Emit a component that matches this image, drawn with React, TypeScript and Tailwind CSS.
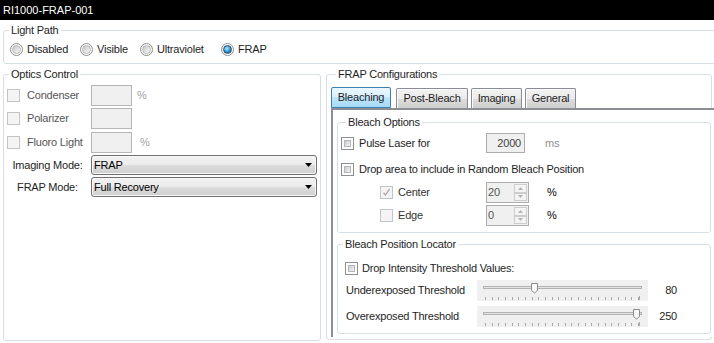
import React from "react";

type CheckVariant = "enabled" | "disabled" | "disabledChecked";

function Check({ variant }: { variant: CheckVariant }) {
  if (variant === "enabled") {
    return (
      <div className="w-[13px] h-[13px] shrink-0 border border-[#8e8f8f] bg-white p-[2px]">
        <div className="w-full h-full border border-[#b4b8bd] bg-[linear-gradient(135deg,#c9ccd1,#f4f4f4)]" />
      </div>
    );
  }
  return (
    <div className="w-[13px] h-[13px] shrink-0 border border-[#c4c4c4] bg-[#f4f4f4] flex items-center justify-center">
      {variant === "disabledChecked" ? (
        <svg width="9" height="9" viewBox="0 0 9 9">
          <path d="M1.5 4.8 L3.5 7 L7.5 1.2" fill="none" stroke="#a8a8a8" strokeWidth="1.3" />
        </svg>
      ) : null}
    </div>
  );
}

function Radio({ checked }: { checked?: boolean }) {
  return (
    <div className="w-[13px] h-[13px] shrink-0 rounded-full border border-[#8e8f8f] bg-white flex items-center justify-center">
      {checked ? (
        <div className="w-[9px] h-[9px] rounded-full border border-[#2b4b66] bg-[radial-gradient(circle_at_40%_35%,#b9ecff_0%,#3aa3e0_45%,#0d4f8c_100%)]" />
      ) : (
        <div className="w-[9px] h-[9px] rounded-full border border-[#b9b9b9] bg-[linear-gradient(135deg,#c8c8c8,#f8f8f8)]" />
      )}
    </div>
  );
}

function Group({
  label,
  className = "",
  children,
}: {
  label: string;
  className?: string;
  children?: React.ReactNode;
}) {
  return (
    <fieldset className={`min-w-0 border border-[#d5dfe5] rounded-[3px] ${className}`}>
      <legend className="ml-[5px] px-[2px] leading-[14px] text-[#1e1e1e]">{label}</legend>
      {children}
    </fieldset>
  );
}

function Select({ value }: { value: string }) {
  return (
    <div className="w-[226px] h-[20px] rounded-[3px] border border-[#707070] bg-[linear-gradient(#f2f2f2,#ebebeb_50%,#dddddd_50%,#cfcfcf)] shadow-[inset_0_0_0_1px_#f8f8f8] flex items-center pl-[2px] pr-[4px]">
      <span className="flex-1 text-black leading-[14px]">{value}</span>
      <svg width="7" height="4" viewBox="0 0 7 4">
        <path d="M0 0h7L3.5 4z" fill="#000" />
      </svg>
    </div>
  );
}

function Spin({ value }: { value: string }) {
  return (
    <div className="w-[43px] h-[21px] border border-[#acacac] bg-[#f0f0f0] flex">
      <span className="flex-1 pl-[1px] leading-[19px] text-[#555]">{value}</span>
      <div className="w-[15px] flex flex-col p-[1px]">
        <div className="flex-1 border border-[#cdcdcd] bg-[#f4f4f4] flex items-center justify-center">
          <svg width="5" height="3" viewBox="0 0 5 3">
            <path d="M0 3h5L2.5 0z" fill="#b2b2b2" />
          </svg>
        </div>
        <div className="flex-1 border border-[#cdcdcd] bg-[#f4f4f4] flex items-center justify-center">
          <svg width="5" height="3" viewBox="0 0 5 3">
            <path d="M0 0h5L2.5 3z" fill="#b2b2b2" />
          </svg>
        </div>
      </div>
    </div>
  );
}

function Slider({ value }: { value: number }) {
  const x = 9 + (value / 255) * 153;
  const ticks: number[] = [];
  for (let i = 0; i < 24; i++) ticks.push(8 + i * 6.65);
  return (
    <svg width="171" height="21" viewBox="0 0 171 21" className="block">
      <rect x="0" y="0" width="171" height="21" fill="#f0f0f0" />
      <rect x="6.5" y="6.5" width="158" height="2" fill="#e4e4e4" stroke="#b3b3b3" strokeWidth="1" />
      {ticks.map((t, i) => (
        <line key={i} x1={Math.round(t) + 0.5} y1="17" x2={Math.round(t) + 0.5} y2="20" stroke="#a9a9a9" strokeWidth="1" />
      ))}
      <line x1="162.5" y1="16" x2="162.5" y2="20" stroke="#a9a9a9" strokeWidth="1" />
      <path
        d={`M${Math.round(x) - 3 + 0.5} 3.5 h6 v7 l-3 2.5 l-3 -2.5 z`}
        fill="#f7f7f7"
        stroke="#8c8c8c"
        strokeWidth="1"
      />
    </svg>
  );
}

export default function App() {
  return (
    <div className="w-[714px] h-[343px] overflow-hidden bg-white text-[11px] tracking-[-0.2px] text-[#1e1e1e] font-['Liberation_Sans',Arial,sans-serif]">
      {/* Title bar */}
      <div className="h-[20px] bg-black text-white pl-[3px] leading-[20px] tracking-normal">RI1000-FRAP-001</div>

      {/* Light Path */}
      <Group label="Light Path" className="ml-[3px] mt-[3px] w-[730px] pt-[6px] pb-[7px]">
        <div className="flex items-center h-[13px] pl-[6px]">
          <div className="w-[70px] flex items-center gap-[4px]">
            <Radio />
            <span>Disabled</span>
          </div>
          <div className="w-[60px] flex items-center gap-[4px]">
            <Radio />
            <span>Visible</span>
          </div>
          <div className="w-[81px] flex items-center gap-[4px]">
            <Radio />
            <span>Ultraviolet</span>
          </div>
          <div className="flex items-center gap-[4px]">
            <Radio checked />
            <span>FRAP</span>
          </div>
        </div>
      </Group>

      <div className="flex mt-[3px] ml-[3px] gap-[5px]">
        {/* Optics Control */}
        <Group label="Optics Control" className="w-[318px] h-[274px] pt-[4px]">
          <div className="flex items-center h-[21px] pl-[3px]">
            <Check variant="disabled" />
            <span className="w-[71px] pl-[7px] text-[#555]">Condenser</span>
            <div className="w-[41px] h-[21px] border border-[#b5b5b5] bg-[#f0f0f0]" />
            <span className="ml-[5px] text-[#a0a0a0]">%</span>
          </div>
          <div className="flex items-center h-[21px] pl-[3px] mt-[2px]">
            <Check variant="disabled" />
            <span className="w-[71px] pl-[7px] text-[#555]">Polarizer</span>
            <div className="w-[41px] h-[21px] border border-[#b5b5b5] bg-[#f0f0f0]" />
          </div>
          <div className="flex items-center h-[21px] pl-[3px] mt-[3px]">
            <Check variant="disabled" />
            <span className="w-[71px] pl-[7px] text-[#555]">Fluoro Light</span>
            <div className="w-[41px] h-[21px] border border-[#b5b5b5] bg-[#f0f0f0]" />
            <span className="ml-[8px] text-[#a0a0a0]">%</span>
          </div>
          <div className="flex items-center mt-[2px]">
            <span className="w-[87px] text-center">Imaging Mode:</span>
            <Select value="FRAP" />
          </div>
          <div className="flex items-center mt-[2px]">
            <span className="w-[87px] text-center">FRAP Mode:</span>
            <Select value="Full Recovery" />
          </div>
        </Group>

        {/* FRAP Configurations */}
        <Group label="FRAP Configurations" className="w-[386px] h-[273px] pt-[6px] pl-[4px]">
          <div className="flex items-end h-[21px]">
            <div className="w-[60px] h-[21px] rounded-t-[2px] border border-[#3c7fb1] bg-[linear-gradient(#eaf6fd,#d9f0fc_50%,#bee6fd_50%,#a7d9f5)] flex items-center justify-center text-[#1e1e1e]">
              Bleaching
            </div>
            <div className="ml-[5px] w-[72px] h-[20px] rounded-t-[2px] border border-[#898c95] border-b-0 bg-[linear-gradient(#f2f2f2,#ebebeb_50%,#dddddd_50%,#cfcfcf)] shadow-[inset_1px_1px_0_#fcfcfc] flex items-center justify-center">
              Post-Bleach
            </div>
            <div className="ml-[3px] w-[51px] h-[20px] rounded-t-[2px] border border-[#898c95] border-b-0 bg-[linear-gradient(#f2f2f2,#ebebeb_50%,#dddddd_50%,#cfcfcf)] shadow-[inset_1px_1px_0_#fcfcfc] flex items-center justify-center">
              Imaging
            </div>
            <div className="ml-[3px] w-[51px] h-[20px] rounded-t-[2px] border border-[#898c95] border-b-0 bg-[linear-gradient(#f2f2f2,#ebebeb_50%,#dddddd_50%,#cfcfcf)] shadow-[inset_1px_1px_0_#fcfcfc] flex items-center justify-center">
              General
            </div>
          </div>

          {/* Tab panel */}
          <div className="w-[400px] h-[229px] border-t-2 border-l-2 border-[#8b8e95] bg-white pt-[5px] pl-[4px]">
            <Group label="Bleach Options" className="w-[374px] pt-[4px] pb-[6px] pl-[3px]">
              <div className="flex items-center h-[20px]">
                <Check variant="enabled" />
                <span className="ml-[5px] w-[127px]">Pulse Laser for</span>
                <div className="w-[39px] h-[20px] border border-[#acacac] bg-[#f0f0f0] text-right pr-[3px] leading-[18px] text-[#444]">
                  2000
                </div>
                <span className="ml-[20px] text-[#8e8e8e]">ms</span>
              </div>
              <div className="flex items-center h-[20px] mt-[6px]">
                <Check variant="enabled" />
                <span className="ml-[5px]">Drop area to include in Random Bleach Position</span>
              </div>
              <div className="flex items-center h-[21px] mt-[3px] pl-[39px]">
                <Check variant="disabledChecked" />
                <span className="ml-[5px] w-[88px] text-[#333]">Center</span>
                <Spin value="20" />
                <span className="ml-[18px] text-black">%</span>
              </div>
              <div className="flex items-center h-[21px] mt-[2px] pl-[39px]">
                <Check variant="disabled" />
                <span className="ml-[5px] w-[88px] text-[#333]">Edge</span>
                <Spin value="0" />
                <span className="ml-[18px] text-black">%</span>
              </div>
            </Group>

            <Group label="Bleach Position Locator" className="w-[374px] mt-[4px] pb-[6px]">
              <div className="flex items-center h-[16px] mt-[9px] pl-[7px]">
                <Check variant="enabled" />
                <span className="ml-[4px]">Drop Intensity Threshold Values:</span>
              </div>
              <div className="flex items-center h-[21px] mt-[4px] pl-[8px]">
                <span className="w-[131px]">Underexposed Threshold</span>
                <Slider value={80} />
                <span className="w-[29px] text-right">80</span>
              </div>
              <div className="flex items-center h-[21px] mt-[5px] pl-[8px]">
                <span className="w-[131px]">Overexposed Threshold</span>
                <Slider value={250} />
                <span className="w-[29px] text-right">250</span>
              </div>
            </Group>
          </div>
        </Group>
      </div>
    </div>
  );
}
